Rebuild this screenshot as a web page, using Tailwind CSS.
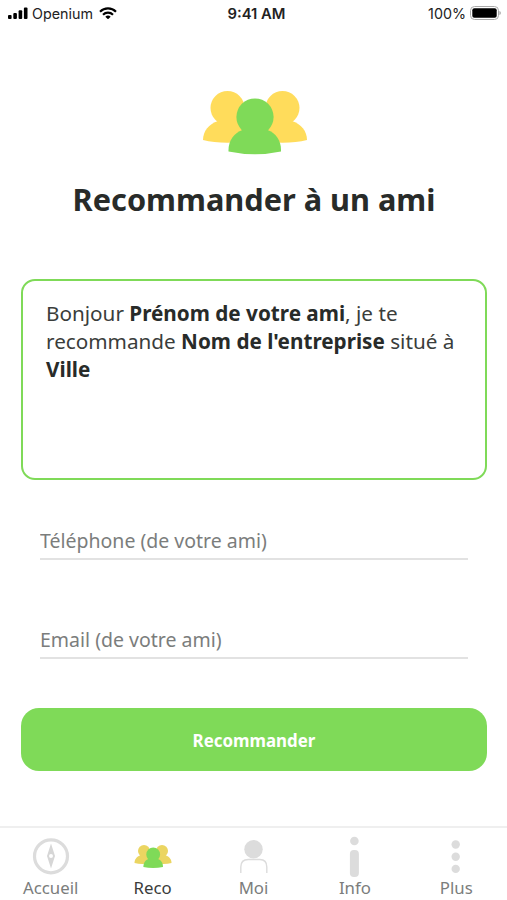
<!DOCTYPE html>
<html lang="fr">
<head>
    <meta charset="UTF-8">
    <meta name="viewport" content="width=device-width, initial-scale=1.0">
    <title>Recommander à un ami</title>
    <script src="https://cdn.jsdelivr.net/npm/@tailwindcss/browser@4"></script>
    <style>
        body {
            font-family: 'Noto Sans', sans-serif;
        }
    </style>
</head>
<body class="bg-white text-[#282b29]">

    <div class="flex h-[900px] w-[507px] flex-col overflow-hidden">

        <!-- Status bar -->
        <header class="grid h-7 grid-cols-3 items-center pl-2 pr-1.5 font-['Inter'] text-[14.3px] text-[#222]">
            <div class="flex items-center">
                <svg class="mr-1 mb-0.5 h-3 w-5" viewBox="0 0 20 12" fill="#000">
                    <rect x="0" y="8" width="3.6" height="4" rx="1"/>
                    <rect x="5.3" y="6" width="3.6" height="6" rx="1"/>
                    <rect x="10.6" y="3.2" width="3.6" height="8.8" rx="1"/>
                    <rect x="15.9" y="0.5" width="3.6" height="11.5" rx="1"/>
                </svg>
                <span>Openium</span>
                <svg class="mb-0.5 ml-1.5 h-3 w-[18px]" viewBox="0 0 18 12" fill="none" stroke="#000" stroke-width="2.2">
                    <path d="M1 4.7a11.5 11.5 0 0 1 16 0"/>
                    <path d="M4 7.7a7.2 7.2 0 0 1 10 0"/>
                    <path d="M6.3 9.7a3.9 3.9 0 0 1 5.4 0L9 12.3z" fill="#000" stroke="none"/>
                </svg>
            </div>
            <div class="pl-1 text-center text-[14.8px] font-semibold">9:41 AM</div>
            <div class="flex items-center justify-end">
                <span>100%</span>
                <svg class="mb-0.5 ml-1 h-[14px] w-[31px]" viewBox="0 0 31 14">
                    <rect x="0.5" y="0.5" width="28" height="13" rx="4" fill="#fff" stroke="#aaa"/>
                    <rect x="2.3" y="2.3" width="24.4" height="9.4" rx="2" fill="#000"/>
                    <path d="M29.5 5v4c1.600-.6 1.600-3.400 0-4z" fill="#999"/>
                </svg>
            </div>
        </header>

        <main class="flex flex-1 flex-col pl-[21px] pr-5 pt-[62px]">
            <svg class="ml-0.5 h-[66px] w-[106px] self-center" viewBox="0 0 106 66">
                <g fill="#ffdc5b">
                    <circle cx="25.5" cy="18" r="17"/>
                    <path d="M1 50C1 41 7 34 16 31h24v21Q17 54 1 50z"/>
                    <circle cx="80.5" cy="18" r="17"/>
                    <path d="M105 50C105 41 99 34 90 31H66v21Q89 54 105 50z"/>
                </g>
                <g fill="#7fda58">
                    <circle cx="53" cy="27" r="18.6"/>
                    <path d="M26.5 61.5C26 51 32 43 40.5 40h25c8.500 3 14 11 13.500 21.500Q53 67 26.500 61.500z"/>
                </g>
            </svg>
            <h1 class="mt-[23px] text-center text-[30.7px] leading-10 font-bold">Recommander à un ami</h1>

            <!-- Message -->
            <div class="mt-[60px] h-[201px] rounded-[14px] border-2 border-[#7fda58] pl-[23px] pt-[18px] text-[20.7px] leading-[28.2px] whitespace-nowrap text-[#3a3d3b]">
                Bonjour <b class="text-[#282b29]">Prénom de votre ami</b>, je te<br>
                recommande <b class="text-[#282b29]">Nom de l'entreprise</b> situé à<br>
                <b class="text-[#282b29]">Ville</b>
            </div>

            <!-- Contact -->
            <form class="flex flex-col">
                <input type="tel" placeholder="Téléphone (de votre ami)" class="mx-[19px] mt-[43px] h-[37px] border-b-2 border-[#e2e2e2] text-[19.5px] outline-none placeholder:text-[#7b7d7c]">
                <input type="email" placeholder="Email (de votre ami)" class="mx-[19px] mt-[62px] h-[37px] border-b-2 border-[#e2e2e2] text-[19.5px] outline-none placeholder:text-[#7b7d7c]">
                <button type="button" class="mt-[49px] h-[63px] rounded-[18px] bg-[#7fda58] pt-0.5 text-[16.9px] font-bold text-white">Recommander</button>
            </form>
        </main>

        <!-- Tab bar -->
        <nav class="grid h-[74px] grid-cols-5 border-t-2 border-[#efefef] text-center text-[16.8px] leading-6 text-[#7b7d7c]">
            <a href="#" class="flex flex-col items-center pt-2">
                <svg class="h-10 w-10" viewBox="0 0 40 40">
                    <circle cx="20" cy="20.3" r="16.5" fill="none" stroke="#dcdcdc" stroke-width="3.2"/>
                    <path fill-rule="evenodd" d="M20 7.500l4 12.500-4 12.500L16 20zM20 18a2 2 0 1 0 0 4 2 2 0 0 0 0-4z" fill="#d6d6d6"/>
                </svg>
                <span>Accueil</span>
            </a>
            <a href="#" class="flex flex-col items-center pt-2 text-[#3a3c3b]">
                <svg class="h-10 w-10" viewBox="0 0 40 40">
                    <g fill="#ebd561">
                        <circle cx="12" cy="15" r="6"/>
                        <path d="M2.500 27c0-4 2.500-6.500 5.500-7.500h9V27.500Q8.500 28.500 2.500 27z"/>
                        <circle cx="30" cy="15" r="6"/>
                        <path d="M39.500 27c0-4-2.500-6.500-5.500-7.500h-9V27.500q8.500 1 14.500-.5z"/>
                    </g>
                    <g fill="#7fda58">
                        <circle cx="21.2" cy="18.5" r="6.9"/>
                        <path d="M11.400 31c0-4.500 2.200-7 5-8h9.600c2.800 1 5 3.500 5 8q-10 2-19.600 0z"/>
                    </g>
                </svg>
                <span class="pl-px">Reco</span>
            </a>
            <a href="#" class="flex flex-col items-center pt-2">
                <svg class="h-10 w-10" viewBox="0 0 40 40">
                    <circle cx="20.5" cy="13.2" r="9.2" fill="#dcdcdc"/>
                    <path d="M7.800 37v-6q0-7.500 7.500-7.500h11.500q7 0 7 7.500v6" fill="none" stroke="#dcdcdc" stroke-width="1.4"/>
                </svg>
                <span>Moi</span>
            </a>
            <a href="#" class="flex flex-col items-center pt-2">
                <svg class="h-10 w-10 overflow-visible" viewBox="0 0 40 40" fill="#dcdcdc">
                    <circle cx="19.4" cy="5" r="4.3"/>
                    <rect x="14.9" y="14" width="9" height="27" rx="4"/>
                </svg>
                <span>Info</span>
            </a>
            <a href="#" class="flex flex-col items-center pt-2">
                <svg class="h-10 w-10" viewBox="0 0 40 40" fill="#dcdcdc">
                    <circle cx="19.7" cy="8.5" r="4.2"/>
                    <circle cx="19.7" cy="20.7" r="4.2"/>
                    <circle cx="19.7" cy="32.9" r="4.2"/>
                </svg>
                <span>Plus</span>
            </a>
        </nav>

    </div>

</body>
</html>
